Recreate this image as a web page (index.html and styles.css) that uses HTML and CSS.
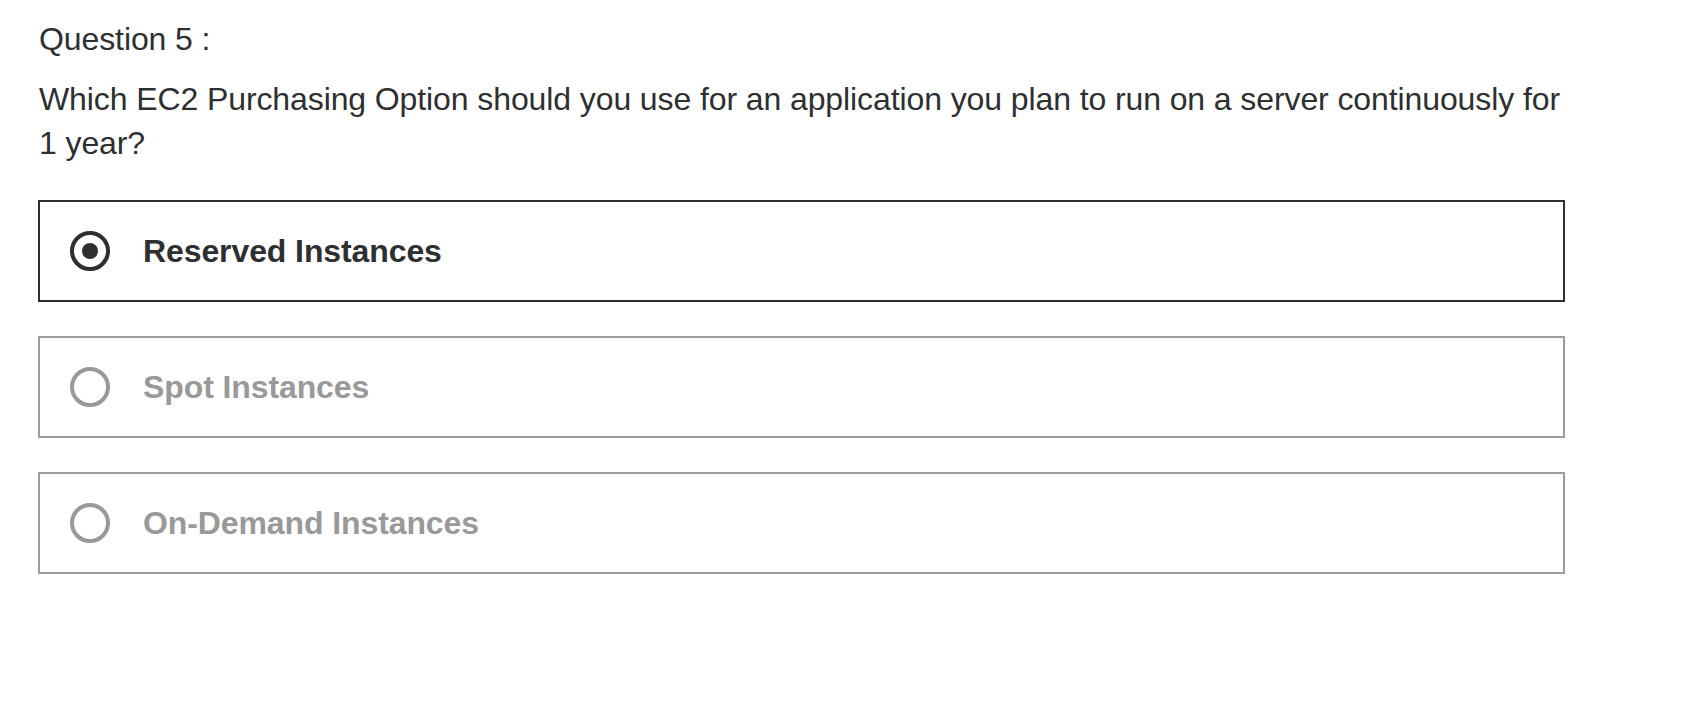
FILE: index.html
```html
<!DOCTYPE html>
<html lang="en">
<head>
<meta charset="utf-8">
<title>Question 5</title>
<link rel="stylesheet" href="styles.css">
</head>
<body>
<main class="quiz">
  <div class="q-title">Question 5 :</div>
  <div class="q-text">Which EC2 Purchasing Option should you use for an application you plan to run on a server continuously for 1 year?</div>
  <ul class="options">
    <li class="option selected">
      <span class="radio"><span class="dot"></span></span>
      <span class="label">Reserved Instances</span>
    </li>
    <li class="option">
      <span class="radio"></span>
      <span class="label">Spot Instances</span>
    </li>
    <li class="option">
      <span class="radio"></span>
      <span class="label">On-Demand Instances</span>
    </li>
  </ul>
</main>
</body>
</html>
```

FILE: styles.css
```css
html, body {
  margin: 0;
  padding: 0;
  background: #ffffff;
}

body {
  font-family: "Liberation Sans", Arial, sans-serif;
  color: #2d2f31;
}

.quiz {
  padding: 17px 0 0 38px;
  width: 1527px;
}

.q-title,
.q-text {
  font-size: 32px;
  line-height: 44px;
  letter-spacing: -0.1px;
  padding-left: 1px;
}

.q-text {
  margin-top: 16px;
}

.options {
  list-style: none;
  margin: 35px 0 0 0;
  padding: 0;
  display: flex;
  flex-direction: column;
  gap: 34px;
}

.option {
  box-sizing: border-box;
  height: 102px;
  border: 2px solid #9c9c9c;
  display: flex;
  align-items: center;
  padding-left: 30px;
  gap: 33px;
  color: #999999;
}

.option.selected {
  border-color: #2d2f31;
  color: #2d2f31;
}

.radio {
  box-sizing: border-box;
  width: 40px;
  height: 40px;
  border: 4px solid #999999;
  border-radius: 50%;
  display: flex;
  align-items: center;
  justify-content: center;
  flex: none;
}

.option.selected .radio {
  border-color: #2d2f31;
}

.dot {
  width: 16px;
  height: 16px;
  border-radius: 50%;
  background: #2d2f31;
}

.label {
  font-size: 32px;
  font-weight: 700;
  letter-spacing: -0.1px;
  line-height: 44px;
}
```
